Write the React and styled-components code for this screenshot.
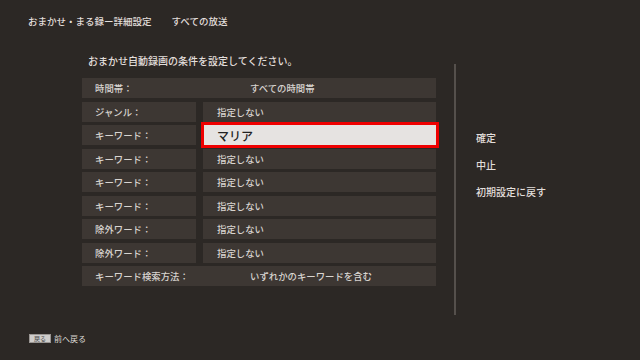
import React from 'react';
import styled, { createGlobalStyle } from 'styled-components';

const Global = createGlobalStyle`
  html, body {
    margin: 0;
    padding: 0;
    background: #2c2825;
  }
  body {
    font-family: "Noto Sans CJK JP", "Noto Sans", sans-serif;
  }
`;

const Screen = styled.div`
  width: 640px;
  height: 360px;
  background: #2c2825;
  color: #dcd8d4;
  position: relative;
  overflow: hidden;
  display: flex;
  flex-direction: column;
`;

const Header = styled.div`
  display: flex;
  gap: 20px;
  padding: 11px 0 0 28px;
  height: 22px;
  font-size: 9.5px;
  font-weight: 500;
  line-height: 20px;
  color: #e2dedb;
`;

const Body = styled.div`
  display: flex;
  flex: 1;
`;

const Main = styled.div`
  width: 354px;
  margin-left: 82px;
  padding-top: 20px;
`;

const Prompt = styled.div`
  font-size: 10px;
  font-weight: 500;
  line-height: 16px;
  padding-left: 6px;
  margin-bottom: 9px;
  color: #e2dedb;
`;

const Table = styled.div`
  display: flex;
  flex-direction: column;
  gap: 3.5px;
`;

const Row = styled.div`
  display: flex;
  gap: 7px;
  height: 20px;
`;

const Cell = styled.div`
  background: #3d3733;
  display: flex;
  align-items: center;
  font-size: 9.4px;
  font-weight: 500;
  color: #d8d4d0;
  white-space: nowrap;
`;

const Label = styled(Cell)`
  width: 114px;
  padding-left: 13px;
  box-sizing: border-box;
`;

const Value = styled(Cell)`
  flex: 1;
  padding-left: 14px;
  position: relative;
`;

const WideRow = styled(Cell)`
  height: 20px;
  padding-left: 13px;
  box-sizing: border-box;
`;

const WideLabel = styled.span`
  width: 155px;
`;

const Selected = styled.div`
  position: absolute;
  left: -2px;
  right: -3px;
  top: -3px;
  bottom: -3px;
  border: 3px solid #ee0000;
  background: #e6e3e1;
  color: #222;
  font-size: 12px;
  font-weight: 500;
  display: flex;
  align-items: center;
  padding-left: 13px;
  box-sizing: border-box;
`;

const Divider = styled.div`
  width: 2px;
  background: #55504c;
  margin: 31px 0 45px 18px;
`;

const Menu = styled.div`
  display: flex;
  flex-direction: column;
  gap: 11px;
  padding: 97px 0 0 20px;
  font-size: 10px;
  font-weight: 500;
  line-height: 16px;
  color: #e2dedb;
`;

const Footer = styled.div`
  position: absolute;
  left: 29px;
  top: 333px;
  display: flex;
  align-items: center;
  gap: 3px;
  font-size: 8px;
  color: #dcd8d4;
`;

const KeyCap = styled.span`
  background: #cfcdcb;
  color: #444;
  font-size: 6px;
  line-height: 7px;
  padding: 0 4px;
  border: 1px solid #9a9693;
`;

const rows = [
  ['ジャンル：', '指定しない'],
  ['キーワード：', 'マリア', true],
  ['キーワード：', '指定しない'],
  ['キーワード：', '指定しない'],
  ['キーワード：', '指定しない'],
  ['除外ワード：', '指定しない'],
  ['除外ワード：', '指定しない'],
];

export default function App() {
  return (
    <Screen>
      <Global />
      <Header>
        <span>おまかせ・まる録ー詳細設定</span>
        <span>すべての放送</span>
      </Header>
      <Body>
        <Main>
          <Prompt>おまかせ自動録画の条件を設定してください。</Prompt>
          <Table>
            <WideRow>
              <WideLabel>時間帯：</WideLabel>
              <span>すべての時間帯</span>
            </WideRow>
            {rows.map(([label, value, sel], i) => (
              <Row key={i}>
                <Label>{label}</Label>
                <Value>
                  {sel ? <Selected>{value}</Selected> : value}
                </Value>
              </Row>
            ))}
            <WideRow>
              <WideLabel>キーワード検索方法：</WideLabel>
              <span>いずれかのキーワードを含む</span>
            </WideRow>
          </Table>
        </Main>
        <Divider />
        <Menu>
          <span>確定</span>
          <span>中止</span>
          <span>初期設定に戻す</span>
        </Menu>
      </Body>
      <Footer>
        <KeyCap>戻る</KeyCap>
        <span>前へ戻る</span>
      </Footer>
    </Screen>
  );
}
